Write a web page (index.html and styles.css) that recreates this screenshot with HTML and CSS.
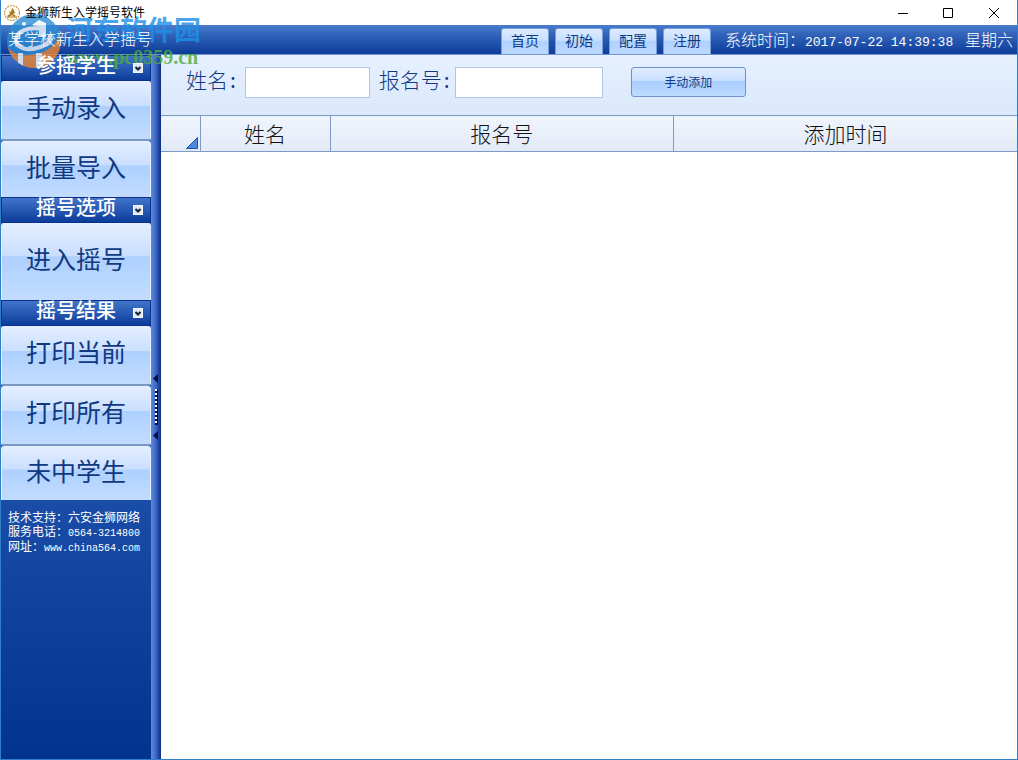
FILE: index.html
```html
<!DOCTYPE html>
<html lang="zh-CN">
<head>
<meta charset="utf-8">
<title>金狮新生入学摇号软件</title>
<link rel="stylesheet" href="styles.css">
</head>
<body>
<div class="window">
  <header class="titlebar">
    <svg class="app-icon" viewBox="0 0 18 18" aria-hidden="true">
      <circle cx="9" cy="9" r="7.5" fill="#fffaf0" stroke="#c39a48" stroke-width="1.2" stroke-dasharray="2 1"/>
      <path d="M4 12l3-2-1-3 2 1 1-4 2 2 1 3-2 1 3 2-2 1-2-2-3 2z" fill="#a87820"/>
      <path d="M4 13h10" stroke="#a87820"/>
    </svg>
    <span class="app-title">金狮新生入学摇号软件</span>
    <div class="window-controls">
      <button type="button" aria-label="最小化"><svg viewBox="0 0 12 12"><path d="M2 6.500h10"/></svg></button>
      <button type="button" aria-label="最大化"><svg viewBox="0 0 12 12"><path d="M1.500 1.500h9v9h-9z"/></svg></button>
      <button type="button" aria-label="关闭"><svg viewBox="0 0 12 12"><path d="M1 1l10 10M11 1L1 11"/></svg></button>
    </div>
  </header>

  <div class="topbar">
    <span class="school">某学校新生入学摇号</span>
    <nav class="tabs">
      <button type="button">首页</button>
      <button type="button">初始</button>
      <button type="button">配置</button>
      <button type="button">注册</button>
    </nav>
    <div class="clock"><span>系统时间：</span><span class="digits">2017-07-22 14:39:38</span><span>星期六</span></div>
  </div>

  <div class="body">
    <aside class="sidebar">
      <div class="section-head"><h2>参摇学生</h2><button type="button" class="fold" aria-label="折叠"><svg viewBox="0 0 8 8"><path d="M1.500 3L4 5.500 6.500 3"/></svg></button></div>
      <button type="button" class="nav-item">手动录入</button>
      <button type="button" class="nav-item last">批量导入</button>
      <div class="section-head"><h2>摇号选项</h2><button type="button" class="fold" aria-label="折叠"><svg viewBox="0 0 8 8"><path d="M1.500 3L4 5.500 6.500 3"/></svg></button></div>
      <button type="button" class="nav-item tall">进入摇号</button>
      <div class="section-head"><h2>摇号结果</h2><button type="button" class="fold" aria-label="折叠"><svg viewBox="0 0 8 8"><path d="M1.500 3L4 5.500 6.500 3"/></svg></button></div>
      <button type="button" class="nav-item">打印当前</button>
      <button type="button" class="nav-item">打印所有</button>
      <button type="button" class="nav-item last short">未中学生</button>
      <div class="support">
        <div>技术支持：六安金狮网络</div>
        <div>服务电话：<span class="mono">0564-3214800</span></div>
        <div>网址：<span class="mono">www.china564.com</span></div>
      </div>
    </aside>

    <div class="splitter">
      <button type="button" class="grip" aria-label="收起侧栏">
        <svg viewBox="0 0 8 68">
          <path d="M6 1v9L1 5.500zM6 58v9L1 62.500z" fill="#041048"/>
          <path d="M4.500 16v36" stroke="#041048" stroke-width="3"/>
          <path d="M4 16v36" stroke="#fff" stroke-width="2" stroke-dasharray="2 2"/>
        </svg>
      </button>
    </div>

    <main class="content">
      <form class="entry">
        <label for="name">姓名<b>:</b></label>
        <input id="name" class="name-input" type="text">
        <label for="number">报名号<b>:</b></label>
        <input id="number" class="number-input" type="text">
        <button type="button" class="add">手动添加</button>
      </form>
      <table class="grid">
        <thead>
          <tr>
            <th class="corner" aria-label="全选"><svg viewBox="0 0 12 12"><path d="M11.500 .5v11H.5z" fill="#4a88e0" stroke="#1c4fa8"/></svg></th>
            <th class="col-name">姓名</th>
            <th>报名号</th>
            <th>添加时间</th>
          </tr>
        </thead>
        <tbody></tbody>
      </table>
    </main>
  </div>

  <div class="watermark">
    <svg class="mark" viewBox="0 0 56 58" aria-hidden="true">
      <defs><clipPath id="disc"><circle cx="29" cy="30" r="27"/></clipPath></defs>
      <g clip-path="url(#disc)">
        <rect width="56" height="58" fill="#2b8dd4"/>
        <path d="M0 31c4 10 13 14 25 13 14-1 24-8 31-20v34H0z" fill="#f0862e"/>
        <path d="M13 42h5v16h-5zM31 42h6v16h-6z" fill="#f2f6fa"/>
        <path d="M34 9l7 3v14h-7zM34 9l-7 5 7 2z" fill="#f2f6fa"/>
      </g>
      <path d="M38 18C22 15 11 21 11 29c0 8 11 11 21 8 9-2 15-8 13-14" fill="none" stroke="#f2f6fa" stroke-width="4"/>
      <circle cx="19" cy="13" r="2" fill="#f2f6fa"/>
    </svg>
    <div class="wm-text">
      <div class="wm-name">河东软件园</div>
      <div class="wm-url">www.pc0359.cn</div>
    </div>
  </div>
</div>
</body>
</html>
```
FILE: styles.css
```css
* { box-sizing: border-box; }
body {
  margin: 0;
  font-family: "Noto Sans CJK SC", sans-serif;
  font-size: 12px;
}
button, input { font-family: inherit; margin: 0; padding: 0; }
h2 { margin: 0; }

.window {
  position: relative;
  display: flex;
  flex-direction: column;
  min-height: 100vh;
  border: 1px solid #2f80c8;
  border-top: 0;
  background: #fff;
}

.titlebar {
  display: flex;
  align-items: center;
  height: 25px;
  padding-left: 2px;
  background: #fff;
}
.app-icon { width: 18px; height: 18px; margin-right: 4px; }
.app-title { padding-bottom: 2px; color: #000; line-height: 22px; }
.window-controls { display: flex; margin-left: auto; }
.window-controls button {
  width: 46px;
  height: 25px;
  border: 0;
  background: none;
}
.window-controls svg {
  display: block;
  width: 12px;
  height: 12px;
  margin: auto;
  fill: none;
  stroke: #000;
}

.topbar {
  display: flex;
  align-items: center;
  height: 30px;
  padding: 0 4px 0 7px;
  border-bottom: 1px solid #6f95d0;
  background: linear-gradient(#4a7ccc, #2f62b8 35%, #0d3c99);
  color: #fff;
  font-size: 16px;
  font-weight: 300;
  white-space: nowrap;
}
.school { padding-bottom: 4px; line-height: 24px; }
.tabs {
  display: flex;
  align-self: flex-end;
  gap: 6px;
  margin-left: auto;
}
.tabs button {
  width: 48px;
  height: 26px;
  padding-bottom: 4px;
  border: 1px solid #7aa0dc;
  border-bottom: 0;
  border-radius: 3px 3px 0 0;
  background: linear-gradient(#deebff, #c8dfff 45%, #b0d1ff 50%, #bcd9ff);
  color: #10397f;
  font-size: 14px;
  line-height: 20px;
}
.clock {
  display: flex;
  align-items: baseline;
  margin-left: 14px;
  padding-bottom: 2px;
}
.digits {
  width: 160px;
  font-family: "Liberation Mono", monospace;
  font-size: 13px;
}

/* App captions stay above the stamp */
.app-title, .school, .section-head h2, .fold { position: relative; z-index: 2; }

.body { display: flex; flex: 1; }

.sidebar {
  display: flex;
  flex-direction: column;
  width: 150px;
  flex: none;
  background: linear-gradient(#2a60bd, #1c4fa9 60%, #02338f);
}
.section-head {
  display: flex;
  align-items: center;
  height: 26px;
  padding: 0 7px 0 34px;
  border: 1px solid #0a2f8c;
  background: linear-gradient(#4173c8, #2a5cb5 45%, #0d3c9b);
}
.section-head h2 {
  flex: 1;
  padding-bottom: 6px;
  color: #fff;
  font-size: 20px;
  font-weight: 500;
  line-height: 18px;
  white-space: nowrap;
}
.fold {
  width: 10px;
  height: 10px;
  border: 1px solid #f4f8ff;
  background: #dfe9f6;
}
.fold svg { display: block; fill: none; stroke: #123; stroke-width: 2; }

.nav-item {
  height: 60px;
  padding-bottom: 10px;
  border: 1px solid #e4efff;
  border-bottom: 2px solid #7b97c4;
  border-radius: 3px;
  background: linear-gradient(#e3eeff, #c9dfff 42%, #aed0ff 43%, #c2dcff);
  color: #10397f;
  font-size: 25px;
  line-height: 28px;
}
.nav-item.last {
  height: 56px;
  padding-bottom: 8px;
  border-bottom: 0;
  border-radius: 3px 3px 0 0;
}
.nav-item.short { height: 54px; }
.nav-item.tall {
  height: 77px;
  padding-bottom: 8px;
  border-bottom: 0;
  border-radius: 3px 3px 0 0;
}
.support {
  padding: 10px 7px;
  color: #fff;
  line-height: 14px;
  white-space: nowrap;
}
.mono {
  font-family: "Liberation Mono", monospace;
  font-size: 10px;
  line-height: 10px;
}

.splitter {
  display: flex;
  align-items: center;
  justify-content: center;
  width: 10px;
  flex: none;
  background: linear-gradient(90deg, #5f8bdd, #3a66c2 50%, #0b2c85);
}
.grip {
  width: 8px;
  height: 68px;
  border: 0;
  background: none;
}
.grip svg { display: block; }

.content { flex: 1; min-width: 0; background: #fff; }
.entry {
  display: flex;
  align-items: center;
  height: 60px;
  padding: 0 25px 6px;
  background: linear-gradient(#e6f0ff, #dbe9fb);
}
.entry label {
  padding-bottom: 6px;
  color: #10397f;
  font-size: 21px;
  font-weight: 300;
  line-height: 28px;
  white-space: nowrap;
}
.entry label b { padding: 0 2px; }
.entry input {
  height: 31px;
  padding: 0 6px;
  border: 1px solid #afc5e2;
  background: #fff;
  font-size: 16px;
}
.name-input { width: 125px; margin: 0 9px 0 7px; }
.number-input { width: 148px; margin-left: 3px; }
.add {
  width: 115px;
  height: 30px;
  margin-left: 28px;
  padding-bottom: 2px;
  border: 1px solid #6f92c8;
  border-radius: 3px;
  background: linear-gradient(#e0edff, #c8dfff 45%, #a9cdff 48%, #bfdbff);
  color: #10397f;
  font-size: 12px;
}

.grid {
  width: 100%;
  border-collapse: collapse;
  table-layout: fixed;
}
.grid th {
  height: 36px;
  padding: 0 0 2px;
  border: 1px solid #7e9bc8;
  border-width: 1px 0 1px 1px;
  background: linear-gradient(#f0f5fc, #e2eaf7);
  color: #111;
  font-size: 21px;
  font-weight: 300;
  line-height: 28px;
}
.grid .corner {
  width: 39px;
  padding: 0 2px 2px 0;
  border-left: 0;
  line-height: 12px;
  text-align: right;
  vertical-align: bottom;
}
.corner svg { display: inline-block; width: 12px; height: 12px; vertical-align: bottom; }
.grid .col-name { width: 130px; }

/* Site stamp laid over the window's upper-left corner */
.watermark {
  position: absolute;
  z-index: 1;
  top: 11px;
  left: 4px;
  display: flex;
  opacity: 0.8;
  pointer-events: none;
}
.mark { width: 56px; height: 58px; }
.wm-text { padding-left: 5px; white-space: nowrap; }
.wm-name {
  color: #1e90e8;
  font-size: 27px;
  font-weight: 700;
  line-height: 36px;
}
.wm-url {
  color: #4fae3c;
  font-family: "Liberation Serif", serif;
  font-size: 20px;
  font-weight: 700;
  line-height: 20px;
}
```
